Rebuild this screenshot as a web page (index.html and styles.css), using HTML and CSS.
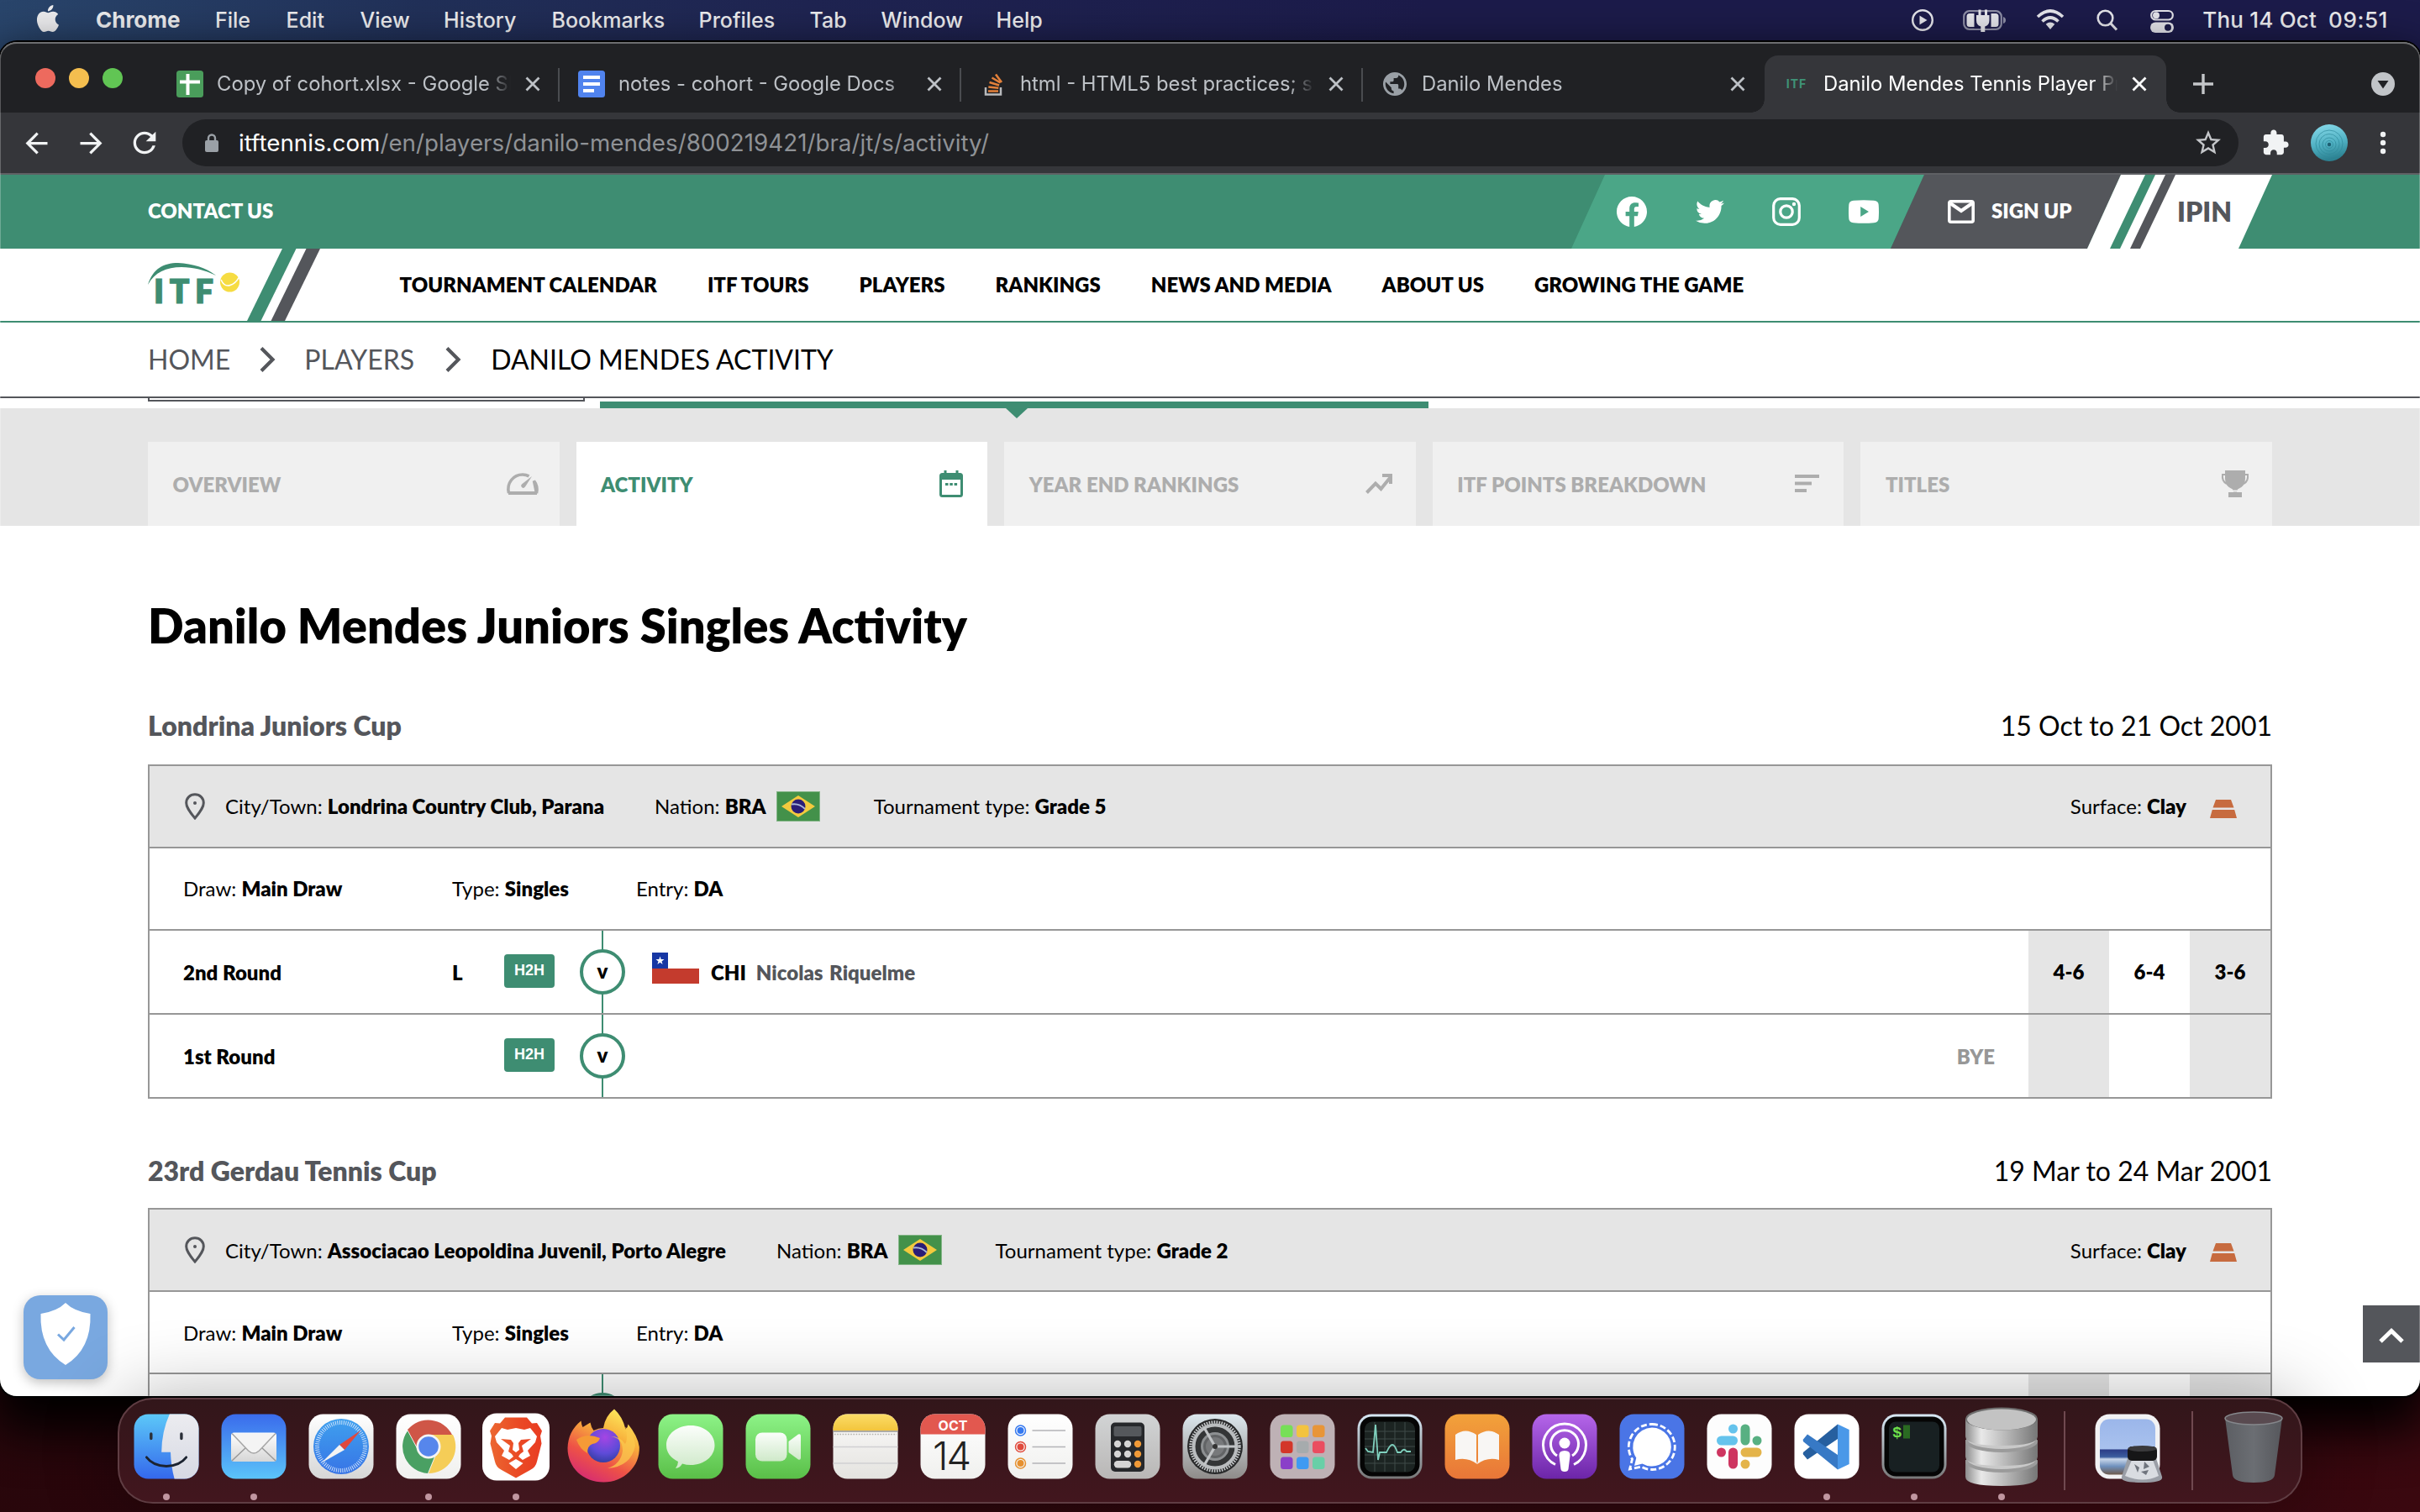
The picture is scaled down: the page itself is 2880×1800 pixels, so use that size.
FILE: index.html
```html
<!DOCTYPE html>
<html lang="en">
<head>
<meta charset="utf-8">
<title>Danilo Mendes Tennis Player Profile</title>
<link rel="stylesheet" href="styles.css">
</head>
<body>
<svg class="defs" width="0" height="0" aria-hidden="true">
  <defs>
    <linearGradient id="g-finder" x1="0" y1="0" x2="0" y2="1"><stop offset="0" stop-color="#5cc8f8"/><stop offset="1" stop-color="#3468ec"/></linearGradient>
    <linearGradient id="g-face" x1="0" y1="0" x2="0" y2="1"><stop offset="0" stop-color="#ececf0"/><stop offset="1" stop-color="#d6d9e3"/></linearGradient>
    <linearGradient id="g-mail" x1="0" y1="0" x2="0" y2="1"><stop offset="0" stop-color="#3a6bec"/><stop offset="1" stop-color="#5bc4f9"/></linearGradient>
    <linearGradient id="g-white" x1="0" y1="0" x2="0" y2="1"><stop offset="0" stop-color="#fff"/><stop offset="1" stop-color="#d6d6d6"/></linearGradient>
    <linearGradient id="g-paper" x1="0" y1="0" x2="0" y2="1"><stop offset="0" stop-color="#fff"/><stop offset="1" stop-color="#f0f0ee"/></linearGradient>
    <linearGradient id="g-compass" x1="0" y1="0" x2="0" y2="1"><stop offset="0" stop-color="#3fa0ee"/><stop offset="1" stop-color="#3774e6"/></linearGradient>
    <linearGradient id="g-green" x1="0" y1="0" x2="0" y2="1"><stop offset="0" stop-color="#8df387"/><stop offset="1" stop-color="#5abf48"/></linearGradient>
    <linearGradient id="g-bubble" x1="0" y1="0" x2="0" y2="1"><stop offset="0" stop-color="#fbfefb"/><stop offset="1" stop-color="#cfe9c9"/></linearGradient>
    <linearGradient id="g-note" x1="0" y1="0" x2="0" y2="1"><stop offset="0" stop-color="#fbdc68"/><stop offset="1" stop-color="#f3c53c"/></linearGradient>
    <linearGradient id="g-pad" x1="0" y1="0" x2="0" y2="1"><stop offset="0" stop-color="#fbfafa"/><stop offset="1" stop-color="#e4e3df"/></linearGradient>
    <linearGradient id="g-brave" x1="0" y1="0" x2="1" y2="0"><stop offset="0" stop-color="#ec6731"/><stop offset=".55" stop-color="#ea4a25"/><stop offset="1" stop-color="#e93c22"/></linearGradient>
    <linearGradient id="g-fox" x1=".8" y1="0" x2=".3" y2="1"><stop offset="0" stop-color="#fdf060"/><stop offset=".35" stop-color="#f8b13c"/><stop offset=".7" stop-color="#ee5246"/><stop offset="1" stop-color="#d62c72"/></linearGradient>
    <radialGradient id="g-foxball" cx=".55" cy=".25" r=".8"><stop offset="0" stop-color="#a545e4"/><stop offset=".6" stop-color="#5e4bd8"/><stop offset="1" stop-color="#2f3c9c"/></radialGradient>
    <linearGradient id="g-calc" x1="0" y1="0" x2="0" y2="1"><stop offset="0" stop-color="#d2d4d5"/><stop offset="1" stop-color="#b9b7b6"/></linearGradient>
    <linearGradient id="g-gear" x1="0" y1="0" x2="0" y2="1"><stop offset="0" stop-color="#dde8ee"/><stop offset="1" stop-color="#8e8b89"/></linearGradient>
    <linearGradient id="g-books" x1="0" y1="0" x2="0" y2="1"><stop offset="0" stop-color="#f2a23a"/><stop offset="1" stop-color="#e97638"/></linearGradient>
    <linearGradient id="g-pod" x1="0" y1="0" x2="0" y2="1"><stop offset="0" stop-color="#b566ea"/><stop offset="1" stop-color="#6c25a8"/></linearGradient>
    <linearGradient id="g-rim" x1="0" y1="0" x2="0" y2="1"><stop offset="0" stop-color="#d8e9f6"/><stop offset="1" stop-color="#777"/></linearGradient>
    <linearGradient id="g-metal" x1="0" y1="0" x2="1" y2="0"><stop offset="0" stop-color="#8d8d8d"/><stop offset=".22" stop-color="#e9e9e9"/><stop offset=".6" stop-color="#b2b2b2"/><stop offset="1" stop-color="#767676"/></linearGradient>
    <linearGradient id="g-sea" x1="0" y1="0" x2="0" y2="1"><stop offset="0" stop-color="#9bb6ea"/><stop offset=".54" stop-color="#a9c2ee"/><stop offset=".55" stop-color="#2b3c86"/><stop offset=".68" stop-color="#3c5d9e"/><stop offset=".72" stop-color="#c9d7ea"/><stop offset=".85" stop-color="#6f90bd"/><stop offset="1" stop-color="#6e5a4c"/></linearGradient>
    <linearGradient id="g-bin" x1="0" y1="0" x2="1" y2="0"><stop offset="0" stop-color="#5c5e63"/><stop offset=".5" stop-color="#6b6e73"/><stop offset="1" stop-color="#56575c"/></linearGradient>
    <linearGradient id="g-ring" x1="0" y1="0" x2=".2" y2="1"><stop offset="0" stop-color="#8adcec"/><stop offset=".6" stop-color="#4fb0c2"/><stop offset="1" stop-color="#2d8292"/></linearGradient>
    <symbol id="x" viewBox="0 0 18 18"><path d="M1.500 1.500l15 15M16.500 1.500l-15 15" fill="none" stroke="currentColor" stroke-width="2.800"/></symbol>
    <symbol id="brazil" viewBox="0 0 52 36"><rect width="52" height="36" fill="#43914a"/><rect x=".5" y=".5" width="51" height="35" fill="none" stroke="#84b587"/><path d="M26 5L46 18 26 31 6 18z" fill="#f3ca3e"/><circle cx="26" cy="18" r="8.500" fill="#2a1d77"/><path d="M18 15.500q9-1.500 16 5.500" fill="none" stroke="#a9b6d8" stroke-width="1.800"/></symbol>
    <symbol id="pin" viewBox="0 0 24 32"><path d="M12 1.700C6.200 1.700 1.700 6 1.700 11.800 1.700 18.500 12 30 12 30s10.300-11.500 10.300-18.200C22.300 6 17.800 1.700 12 1.700z" fill="none" stroke="#54565b" stroke-width="3"/><circle cx="12" cy="12" r="2" fill="#54565b"/></symbol>
    <symbol id="clay" viewBox="0 0 32 22"><path d="M7 0h18l3.500 9.500h-25zM2.800 12h26.400L32 22H0z" fill="#c76b3f"/></symbol>
  </defs>
</svg>

<header class="menubar">
  <svg class="apple" viewBox="0 0 24 24"><path fill="#ececee" d="M12.152 6.896c-.948 0-2.415-1.078-3.960-1.040-2.040.027-3.910 1.183-4.961 3.014-2.117 3.675-.546 9.103 1.519 12.090 1.013 1.454 2.208 3.090 3.792 3.039 1.520-.065 2.090-.987 3.935-.987 1.831 0 2.350.987 3.960.948 1.637-.026 2.676-1.480 3.676-2.948 1.156-1.688 1.636-3.325 1.662-3.415-.039-.013-3.182-1.221-3.220-4.857-.026-3.040 2.480-4.494 2.597-4.559-1.429-2.090-3.623-2.324-4.390-2.376-2-.156-3.675 1.090-4.610 1.090zM15.530 3.830c.843-1.012 1.400-2.427 1.245-3.830-1.207.052-2.662.805-3.532 1.818-.780.896-1.454 2.338-1.273 3.714 1.338.104 2.715-.688 3.559-1.701"/></svg>
  <nav class="menus"><b>Chrome</b><span>File</span><span>Edit</span><span>View</span><span>History</span><span>Bookmarks</span><span>Profiles</span><span>Tab</span><span>Window</span><span>Help</span></nav>
  <div class="status">
    <svg class="st-play" viewBox="0 0 28 28"><circle cx="14" cy="14" r="11.800" fill="none" stroke="#e4e4ea" stroke-width="2.400"/><path d="M10.500 8.500v11l9-5.500z" fill="#e4e4ea"/></svg>
    <svg class="st-batt" viewBox="0 0 52 28"><rect x="1.200" y="3.200" width="44.600" height="21.600" rx="6.500" fill="none" stroke="#8e8ea6" stroke-width="2.200"/><path d="M48 10q3 1 3 4t-3 4z" fill="#8e8ea6"/><path d="M8 6h6v16H8q-3.500 0-3.500-3.500v-9Q4.500 6 8 6zM33 6h6q3.500 0 3.500 3.500v9q0 3.500-3.500 3.500h-6z" fill="#e4e4ea"/><path d="M13.500 5h20v19h-20z" fill="#1c1b4a"/><path d="M20 1.500v7M27.500 1.500v7" stroke="#e4e4ea" stroke-width="3"/><path d="M16 8h15.500v6q0 6-5.200 7.500V28h-5v-6.500Q16 20 16 14z" fill="#e4e4ea"/></svg>
    <svg class="st-wifi" viewBox="0 0 34 24"><path d="M2 9q15-14 30 0M7.500 14.500q9.500-9 19 0" fill="none" stroke="#e4e4ea" stroke-width="3.600"/><path d="M17 24l-5.300-6.200q5.300-4.400 10.600 0z" fill="#e4e4ea"/></svg>
    <svg class="st-find" viewBox="0 0 26 26"><circle cx="10.500" cy="10.500" r="8.800" fill="none" stroke="#e4e4ea" stroke-width="2.600"/><path d="M17 17l7 7.500" stroke="#e4e4ea" stroke-width="3"/></svg>
    <svg class="st-ctl" viewBox="0 0 30 28"><rect x="2.200" y="2" width="25.600" height="10.500" rx="5.200" fill="none" stroke="#e4e4ea" stroke-width="2.200"/><circle cx="8" cy="7.200" r="4" fill="#e4e4ea"/><rect x="1" y="15.500" width="28" height="12.500" rx="6.200" fill="#e4e4ea"/><circle cx="22" cy="21.700" r="4" fill="#1e1d4b"/></svg>
    <span class="day">Thu 14 Oct</span><span class="time">09:51</span>
  </div>
</header>

<main class="window">
  <div class="tabstrip">
    <div class="lights"><i class="red"></i><i class="amber"></i><i class="green"></i></div>
    <div class="tab">
      <svg class="fav" viewBox="0 0 32 32"><rect width="32" height="32" rx="3.500" fill="#4a9d5b"/><path d="M13.500 4v25M4 13.500h24" stroke="#fff" stroke-width="4"/></svg>
      <span class="tab-title">Copy of cohort.xlsx - Google Sheets</span><svg class="close"><use href="#x"/></svg>
    </div>
    <div class="tab">
      <svg class="fav" viewBox="0 0 32 32"><rect width="32" height="32" rx="3.500" fill="#5083ee"/><path d="M6 8h20M6 16h20M6 24h13" stroke="#fff" stroke-width="3.800"/></svg>
      <span class="tab-title">notes - cohort - Google Docs</span><svg class="close"><use href="#x"/></svg>
    </div>
    <div class="tab">
      <svg class="fav" viewBox="-1 0 32 32"><path d="M6 20v8.500h18V20" fill="none" stroke="#b9bbbd" stroke-width="2.500"/><path d="M9 24.500h12M9.300 19.500l12 1.300M10.500 14l11.600 3.500M13.500 8.500l10 6M18 4.500l7 9.500" stroke="#e2803a" stroke-width="2.600"/></svg>
      <span class="tab-title">html - HTML5 best practices; section</span><svg class="close"><use href="#x"/></svg>
    </div>
    <div class="tab plain">
      <svg class="fav" viewBox="0.600 0.600 22.800 22.800"><path fill="#9aa0a6" d="M12 2C6.480 2 2 6.480 2 12s4.480 10 10 10 10-4.480 10-10S17.520 2 12 2zm-1 17.930c-3.950-.490-7-3.850-7-7.930 0-.620.080-1.210.210-1.790L9 15v1c0 1.100.900 2 2 2v1.930zm6.900-2.540c-.260-.810-1-1.390-1.900-1.390h-1v-3c0-.550-.450-1-1-1H8v-2h2c.550 0 1-.450 1-1V7h2c1.100 0 2-.900 2-2v-.410c2.930 1.190 5 4.060 5 7.410 0 2.080-.800 3.970-2.100 5.390z"/></svg>
      <span class="tab-title">Danilo Mendes</span><svg class="close"><use href="#x"/></svg>
    </div>
    <div class="tab active">
      <span class="fav itf-fav">ITF</span>
      <span class="tab-title">Danilo Mendes Tennis Player Profile</span><svg class="close"><use href="#x"/></svg>
    </div>
    <svg class="plus" viewBox="0 0 24 24"><path d="M12 0v24M0 12h24" stroke="#c4c6c9" stroke-width="3.400"/></svg>
    <svg class="more-tabs" viewBox="0 0 28 28"><circle cx="14" cy="14" r="14" fill="#c1c4c8"/><path d="M7.500 10h13L14 19.500z" fill="#202124"/></svg>
  </div>

  <div class="toolbar">
    <svg class="tb back" viewBox="0 0 24 24"><path d="M20 11H7.830l5.590-5.590L12 4l-8 8 8 8 1.410-1.410L7.830 13H20v-2z"/></svg>
    <svg class="tb fwd" viewBox="0 0 24 24"><path d="M4 11h12.170l-5.590-5.590L12 4l8 8-8 8-1.410-1.410L16.170 13H4z"/></svg>
    <svg class="tb reload" viewBox="0 0 24 24"><path d="M17.650 6.350A7.958 7.958 0 0012 4c-4.420 0-7.990 3.580-7.990 8s3.570 8 7.990 8c3.730 0 6.840-2.550 7.730-6h-2.080A5.990 5.990 0 0112 18c-3.310 0-6-2.690-6-6s2.690-6 6-6c1.660 0 3.140.690 4.220 1.780L13 11h7V4l-2.350 2.350z"/></svg>
    <div class="omnibox">
      <svg class="lock" viewBox="0 0 16 22"><rect y="8" width="16" height="14" rx="2" fill="#9aa0a6"/><path d="M4 9V5.500a4 4 0 018 0V9" fill="none" stroke="#9aa0a6" stroke-width="2.400"/></svg>
      <span class="url"><em>itftennis.com</em>/en/players/danilo-mendes/800219421/bra/jt/s/activity/</span>
      <svg class="star" viewBox="0 0 24 24"><path fill="#c4c6c9" d="M22 9.240l-7.190-.620L12 2 9.190 8.630 2 9.240l5.460 4.730L5.820 21 12 17.270 18.180 21l-1.630-7.030L22 9.240zM12 15.400l-3.760 2.270 1-4.280-3.320-2.880 4.380-.380L12 6.100l1.710 4.040 4.380.380-3.320 2.880 1 4.280L12 15.400z"/></svg>
    </div>
    <svg class="puzzle" viewBox="0 0 24 24"><path fill="#f1f3f4" d="M20.500 11H19V7c0-1.100-.900-2-2-2h-4V3.500C13 2.120 11.880 1 10.500 1S8 2.120 8 3.500V5H4c-1.100 0-1.990.900-1.990 2v3.800H3.500c1.490 0 2.700 1.210 2.700 2.700s-1.210 2.700-2.700 2.700H2V20c0 1.100.900 2 2 2h3.800v-1.500c0-1.490 1.210-2.700 2.700-2.700 1.490 0 2.700 1.210 2.700 2.700V22H17c1.100 0 2-.900 2-2v-4h1.500c1.380 0 2.500-1.120 2.500-2.500S21.880 11 20.500 11z"/></svg>
    <svg class="avatar" viewBox="0 0 44 44"><circle cx="22" cy="22" r="22" fill="url(#g-ring)"/><g fill="none" stroke="#2f8b9c" stroke-width="1" opacity=".7"><circle cx="22" cy="24" r="4.500"/><circle cx="22" cy="24" r="8"/><circle cx="22" cy="23.500" r="12"/><circle cx="22" cy="23" r="16"/></g><circle cx="22" cy="24" r="2.200" fill="#1d5f72"/></svg>
    <svg class="dots" viewBox="0 0 8 28"><circle cx="4" cy="4" r="3.200"/><circle cx="4" cy="14" r="3.200"/><circle cx="4" cy="24" r="3.200"/></svg>
  </div>

  <div class="topbar">
    <a class="contact">CONTACT US</a>
    <div class="social">
      <svg class="fb" viewBox="0 0 24 24"><path d="M24 12.073c0-6.627-5.373-12-12-12s-12 5.373-12 12c0 5.990 4.388 10.954 10.125 11.854v-8.385H7.078v-3.470h3.047V9.430c0-3.007 1.792-4.669 4.533-4.669 1.312 0 2.686.235 2.686.235v2.953H15.830c-1.491 0-1.956.925-1.956 1.874v2.250h3.328l-.532 3.470h-2.796v8.385C19.612 23.027 24 18.062 24 12.073z"/></svg>
      <svg class="tw" viewBox="0 0 24 24"><path d="M23.953 4.570a10 10 0 01-2.825.775 4.958 4.958 0 002.163-2.723c-.951.555-2.005.959-3.127 1.184a4.920 4.920 0 00-8.384 4.482C7.690 8.095 4.067 6.130 1.640 3.162a4.822 4.822 0 00-.666 2.475c0 1.710.870 3.213 2.188 4.096a4.904 4.904 0 01-2.228-.616v.060a4.923 4.923 0 003.946 4.827 4.996 4.996 0 01-2.212.085 4.936 4.936 0 004.604 3.417 9.867 9.867 0 01-6.102 2.105c-.390 0-.779-.023-1.170-.067a13.995 13.995 0 007.557 2.209c9.053 0 13.998-7.496 13.998-13.985 0-.210 0-.420-.015-.630A9.935 9.935 0 0024 4.590z"/></svg>
      <svg class="ig" viewBox="0 0 34 34"><rect x="1.700" y="1.700" width="30.600" height="30.600" rx="8" fill="none" stroke="#fff" stroke-width="3.200"/><circle cx="17" cy="17" r="7.200" fill="none" stroke="#fff" stroke-width="3.200"/><circle cx="26" cy="8" r="2.200"/></svg>
      <svg class="yt" viewBox="0 0 36 28"><path fill-rule="evenodd" d="M6 .700Q18-.300 30 .700q5.500.500 5.700 5 .6 8.300 0 16.600-.2 4.500-5.700 5-12 1-24 0-5.500-.500-5.700-5-.6-8.300 0-16.600Q.500 1.200 6 .700zM14.200 8v12L24 14z"/></svg>
    </div>
    <div class="signup"><svg class="mail" viewBox="0 0 32 28"><rect x="1.800" y="1.800" width="28.400" height="24.400" rx="2" fill="none" stroke="#fff" stroke-width="3.600"/><path d="M3 4l13 9L29 4" fill="none" stroke="#fff" stroke-width="4"/></svg><span>SIGN UP</span></div>
    <div class="ipin"><svg class="stripes" viewBox="0 0 80 88"><path d="M42 0h12L12 88H0z" fill="#3e8d72"/><path d="M66 0h12L36 88H24z" fill="#54565b"/></svg><span>IPIN</span></div>
  </div>

  <div class="navbar">
    <div class="logo">
      <svg viewBox="0 0 206 86"><path d="M0 43C6 24 18 17 36 17c18 1 34 6 45 15C69 26 54 22 40 22 22 22 8 28 0 43z" fill="#3e8d72"/><circle cx="97.500" cy="40" r="11.500" fill="#f6dc42"/><path d="M87 37q4 9 11 6.500t10-9" fill="none" stroke="#fff" stroke-width="1.600"/><path d="M160 0h16.500L134.500 86H118z" fill="#3e8d72"/><path d="M188.500 0H205L163 86h-16.500z" fill="#54565b"/><text x="7" y="65" class="logo-text" textLength="71">ITF</text></svg>
    </div>
    <nav class="links"><a>TOURNAMENT CALENDAR</a><a>ITF TOURS</a><a>PLAYERS</a><a>RANKINGS</a><a>NEWS AND MEDIA</a><a>ABOUT US</a><a>GROWING THE GAME</a></nav>
  </div>

  <div class="crumbs"><a>HOME</a><svg viewBox="0 0 18 30"><path d="M2 1.500L15.500 15 2 28.500" fill="none" stroke="#54565b" stroke-width="4.200"/></svg><a>PLAYERS</a><svg class="second" viewBox="0 0 18 30"><path d="M2 1.500L15.500 15 2 28.500" fill="none" stroke="#54565b" stroke-width="4.200"/></svg><b>DANILO MENDES ACTIVITY</b></div>

  <div class="peek"><div class="peek-box"></div><div class="peek-bar"></div></div>

  <div class="subtabs">
    <a class="subtab">OVERVIEW<svg class="i-gauge" viewBox="0 0 38 26"><path d="M2.500 24C-.5 12 8 2 19 2q4 0 7.500 1.800M32.500 9.500Q37.500 16 35.500 24z" fill="none" stroke="#adadad" stroke-width="3.600"/><path d="M2 24h34" stroke="#adadad" stroke-width="4"/><path d="M30 4L22 16.500q-2 2.500-4 .5t.500-4z" fill="#adadad"/></svg></a>
    <a class="subtab on">ACTIVITY<svg class="i-cal" viewBox="0 0 28 32"><path d="M7 0v6M21 0v6" stroke="#3e8d72" stroke-width="3"/><rect x="1.500" y="4.500" width="25" height="26" rx="2" fill="none" stroke="#3e8d72" stroke-width="3"/><path d="M1 4h26v7H1z" fill="#3e8d72"/><path d="M7 16.500h3.500M12.300 16.500h3.500M17.600 16.500h3.500" stroke="#3e8d72" stroke-width="3"/></svg></a>
    <a class="subtab">YEAR END RANKINGS<svg class="i-trend" viewBox="0 0 32 24"><path d="M1.500 22.500L12 11.500l6.500 6.500L29 5M20 2h10v10" fill="none" stroke="#adadad" stroke-width="4"/></svg></a>
    <a class="subtab">ITF POINTS BREAKDOWN<svg class="i-bars" viewBox="0 0 30 22"><path d="M0 2h29M0 10.500h20M0 19h14" stroke="#adadad" stroke-width="3.800"/></svg></a>
    <a class="subtab">TITLES<svg class="i-cup" viewBox="0 0 34 32"><path d="M5 0h24v10q0 9-9 12.500l-1 3.500h6v6H9v-6h6l-1-3.500Q5 19 5 10z" fill="#adadad"/><path d="M5 5H2q-1 8 5 11M29 5h3q1 8-5 11" fill="none" stroke="#adadad" stroke-width="2"/><path d="M13 24.500h8" stroke="#f0f0f0" stroke-width="2"/></svg></a>
  </div>

  <section class="content">
    <h1>Danilo Mendes Juniors Singles Activity</h1>
    <div class="event-head first"><h2>Londrina Juniors Cup</h2><span>15 Oct to 21 Oct 2001</span></div>
    <div class="event raised">
      <div class="venue"><svg class="pin"><use href="#pin"/></svg><span class="city">City/Town: <b>Londrina Country Club, Parana</b></span><span>Nation: <b>BRA</b></span><svg class="flag"><use href="#brazil"/></svg><span>Tournament type: <b>Grade 5</b></span><span class="surface">Surface: <b>Clay</b></span><svg class="clay"><use href="#clay"/></svg></div>
      <div class="draw"><span>Draw: <b>Main Draw</b></span><span>Type: <b>Singles</b></span><span>Entry: <b>DA</b></span></div>
      <div class="match">
        <b>2nd Round</b><b>L</b><span class="h2h">H2H</span><div class="vs"><b>v</b></div>
        <div class="opp"><svg class="chile" viewBox="0 0 56 37"><path d="M0 0h19v19H0z" fill="#1737a4"/><path d="M19 0h37v19H19z" fill="#fff"/><path d="M0 19h56v18H0z" fill="#c43b2d"/><path d="M9.500 4.500l1.200 3.600h3.800l-3 2.300 1.100 3.600-3.100-2.200L6.400 14l1.100-3.600-3-2.300h3.800z" fill="#fff"/></svg><b>CHI</b><span class="name">Nicolas Riquelme</span></div>
        <b class="set">4-6</b><b class="set mid">6-4</b><b class="set">3-6</b>
      </div>
      <div class="match">
        <b>1st Round</b><b></b><span class="h2h">H2H</span><div class="vs"><b>v</b></div>
        <div class="opp"><span class="bye">BYE</span></div>
        <b class="set"></b><b class="set mid"></b><b class="set"></b>
      </div>
    </div>
    <div class="event-head"><h2>23rd Gerdau Tennis Cup</h2><span>19 Mar to 24 Mar 2001</span></div>
    <div class="event">
      <div class="venue"><svg class="pin"><use href="#pin"/></svg><span class="city">City/Town: <b>Associacao Leopoldina Juvenil, Porto Alegre</b></span><span>Nation: <b>BRA</b></span><svg class="flag"><use href="#brazil"/></svg><span>Tournament type: <b>Grade 2</b></span><span class="surface">Surface: <b>Clay</b></span><svg class="clay"><use href="#clay"/></svg></div>
      <div class="draw"><span>Draw: <b>Main Draw</b></span><span>Type: <b>Singles</b></span><span>Entry: <b>DA</b></span></div>
      <div class="match">
        <b></b><b></b><span></span><div class="vs"><b></b></div><div class="opp"></div>
        <b class="set"></b><b class="set mid"></b><b class="set"></b>
      </div>
    </div>
  </section>
  <div class="shield"><svg viewBox="0 0 60 74"><path d="M30 0Q40 10 59.500 13 61 55 30 74-1 55 .500 13 20 10 30 0z" fill="#fff"/><path d="M21 37.500l7 6.500 12.500-15" fill="none" stroke="#79a8e0" stroke-width="3"/></svg></div>
  <div class="to-top"><svg viewBox="0 0 30 18"><path d="M2 16L15 3.500 28 16" fill="none" stroke="#fff" stroke-width="5"/></svg></div>
</main>

<footer class="dock">
  <div class="app run"><svg viewBox="0 0 104 104"><rect x="13.500" y="13.500" width="77" height="77" rx="17" fill="url(#g-finder)"/><path d="M55.800 13.500H73.500a17 17 0 0117 17v43a17 17 0 01-17 17H61.600Q57.500 76 57 58.800H46.200Q46.500 34 55.800 13.500z" fill="url(#g-face)"/><path d="M33.800 37v5.500M69.900 37v5.500" stroke="#2b3038" stroke-width="3.400" stroke-linecap="round"/><path d="M28.400 64.800Q36 75 52 75.500q16-.5 23.700-10.700" fill="none" stroke="#1b2330" stroke-width="2.800" stroke-linecap="round"/></svg></div>
  <div class="app run"><svg viewBox="0 0 104 104"><rect x="13.500" y="13.500" width="77" height="77" rx="17" fill="url(#g-mail)"/><rect x="25" y="35.500" width="54" height="34.500" rx="3.500" fill="url(#g-white)"/><path d="M26 69l17-16M78 69L61 53" stroke="#9a9a9a" stroke-width="1.500"/><path d="M26 36.500l19.500 20.500q6.500 6 13 0L78 36.500" fill="#f4f4f4" stroke="#a5a5a5" stroke-width="1.500"/></svg></div>
  <div class="app"><svg viewBox="0 0 104 104"><rect x="13.500" y="13.500" width="77" height="77" rx="17" fill="url(#g-white)"/><circle cx="52" cy="52" r="33" fill="url(#g-compass)"/><circle cx="52" cy="52" r="28.500" fill="none" stroke="#d8e8fb" stroke-width="5" stroke-dasharray=".9 1.590"/><path d="M75.400 32.800L56 56l-6-6z" fill="#e0483d"/><path d="M28.500 71.500L56 56l-6-6z" fill="#f3f3f3"/></svg></div>
  <div class="app run"><svg viewBox="0 0 104 104"><rect x="13.500" y="13.500" width="77" height="77" rx="17" fill="url(#g-paper)"/><path d="M52 38h29a32 32 0 01-29 46l13-32z" fill="#f5cd57"/><path d="M27 33.500L40 58l20 4-9 22A32 32 0 0127 33.500z" fill="#4aa063"/><path d="M27 32l13 24 10-18h30A32 32 0 0027 32z" fill="#cf5647"/><circle cx="52" cy="52" r="14.500" fill="#f4f4f4"/><circle cx="52" cy="52" r="11.800" fill="#5686ec"/></svg></div>
  <div class="app run"><svg viewBox="0 0 104 104"><rect x="12" y="12.500" width="80" height="80" rx="17" fill="#fff"/><path d="M39 17.500h26l6 7 6-.5 6 9.500-2 6 1.500 9L77 70q-1.500 7-8 10L52 89.500 35 80q-6.500-3-8-10l-5.500-21.500 1.500-9-2-6L27 24l6 .5z" fill="url(#g-brave)"/><path d="M35 30l7 2 10-2 10 2 7-2 8 10-2 7-9 10 3 6-9 5-5-4 2-3 4-3-2-7 11-8-12 1-3 4 1 8-4 3-4-3 1-8-3-4-12-1 11 8-2 7 4 3 2 3-5 4-9-5 3-6-9-10-2-7z" fill="#fff"/><path d="M52 67l8.500 5L52 79l-8.500-7z" fill="#fff"/></svg></div>
  <div class="app"><svg viewBox="0 0 104 104"><path d="M65 7.500q10 9 13.500 24 3-3 3-6 11.500 14 13.300 27C96 76 76 94.500 52.500 94.500 28 94.500 9.500 77 9.500 54q.5-20 16-32.500.5 5 2 7.500l9-5.500q1 6 4 9.500 6-3 11.500-3Q54 16 65 7.500z" fill="url(#g-fox)"/><circle cx="52" cy="51" r="20" fill="url(#g-foxball)"/><path d="M20 44q12-9 28-2-2 6-9 7-6 2-6 11-9-5-13-16z" fill="#f59a36"/><path d="M61 40q14 2 14 17-2 16-18 21 28-2 33-27-2-18-12-22 4 14 0 20-6-9-17-9z" fill="#fbc94e" opacity=".75"/></svg></div>
  <div class="app"><svg viewBox="0 0 104 104"><rect x="13.500" y="13.500" width="77" height="77" rx="17" fill="url(#g-green)"/><path d="M52 27c16 0 28.500 10 28.500 23.500S68 74 52 74q-5 0-10-1.500-3 5-8 5.500 3-4 3-8-14-7-14-19.500C23 37 36 27 52 27z" fill="url(#g-bubble)"/></svg></div>
  <div class="app"><svg viewBox="0 0 104 104"><rect x="13.500" y="13.500" width="77" height="77" rx="17" fill="url(#g-green)"/><rect x="25" y="35.500" width="37.500" height="34" rx="8" fill="url(#g-bubble)"/><path d="M64.500 46L76 37.500q3-1 3 2v26q0 3-3 2L64.500 59z" fill="url(#g-bubble)"/></svg></div>
  <div class="app"><svg viewBox="0 0 104 104"><rect x="13.500" y="13.500" width="77" height="77" rx="17" fill="url(#g-pad)"/><path d="M13.500 33V30.500a17 17 0 0117-17h43a17 17 0 0117 17V33z" fill="url(#g-note)"/><path d="M13.500 34h77" stroke="#96938a" stroke-width="1.500"/><path d="M15 37.500h74" stroke="#b5b3ad" stroke-width="1.600" stroke-dasharray="1.600 1.600"/><path d="M13.500 52.500h77M13.500 72h77" stroke="#d0cfd2" stroke-width="1.600"/></svg></div>
  <div class="app"><svg viewBox="0 0 104 104"><rect x="13.500" y="13.500" width="77" height="77" rx="17" fill="url(#g-paper)"/><path d="M13.500 37.500v-7a17 17 0 0117-17h43a17 17 0 0117 17v7z" fill="#e2584f"/><text x="52" y="32.800" class="cal-month">OCT</text><text x="50" y="79.500" class="cal-day">14</text></svg></div>
  <div class="app"><svg viewBox="0 0 104 104"><rect x="13.500" y="13.500" width="77" height="77" rx="17" fill="url(#g-paper)"/><g fill="none" stroke-width="1.500"><circle cx="28.500" cy="33" r="6" stroke="#3478f0"/><circle cx="28.500" cy="52.500" r="6" stroke="#e04a3c"/><circle cx="28.500" cy="72" r="6" stroke="#e6902f"/></g><circle cx="28.500" cy="33" r="4" fill="#3478f0"/><circle cx="28.500" cy="52.500" r="4" fill="#e04a3c"/><circle cx="28.500" cy="72" r="4" fill="#e6902f"/><path d="M42.500 33h39.500M42.500 52.500h39.500M42.500 72h39.500" stroke="#b4b4b8" stroke-width="1.600"/></svg></div>
  <div class="app"><svg viewBox="0 0 104 104"><rect x="13.500" y="13.500" width="77" height="77" rx="17" fill="url(#g-calc)"/><rect x="32" y="23.500" width="40" height="58.500" rx="5" fill="#26282b"/><rect x="35.500" y="28" width="33" height="12" rx="2" fill="#55585c"/><g fill="#d5d5d5"><circle cx="40" cy="49" r="4.200"/><circle cx="52" cy="49" r="4.200"/><circle cx="40" cy="61" r="4.200"/><circle cx="52" cy="61" r="4.200"/><rect x="35.800" y="69" width="20.400" height="8.400" rx="4.200"/></g><g fill="#f09a37"><circle cx="64" cy="49" r="4.200"/><circle cx="64" cy="61" r="4.200"/><circle cx="64" cy="73" r="4.200"/></g></svg></div>
  <div class="app"><svg viewBox="0 0 104 104"><rect x="13.500" y="13.500" width="77" height="77" rx="17" fill="url(#g-gear)"/><circle cx="52" cy="52" r="33" fill="#28292a"/><circle cx="52" cy="52" r="29" fill="none" stroke="#c5c8ca" stroke-width="3.500" stroke-dasharray="1.600 1.400"/><circle cx="52" cy="52" r="25.500" fill="#333536" stroke="#b9bcbe" stroke-width="4"/><circle cx="52" cy="52" r="15.500" fill="#626466" stroke="#8d9092" stroke-width="3"/><circle cx="52" cy="52" r="11" fill="#77797b"/><path d="M52 52h26M52 52L39 29.500M52 52L39 74.500" stroke="#c0c3c5" stroke-width="3.200"/><circle cx="52" cy="52" r="3" fill="#333"/></svg></div>
  <div class="app"><svg viewBox="0 0 104 104"><rect x="13.500" y="13.500" width="77" height="77" rx="17" fill="#beb1b5"/><rect x="26" y="26.500" width="14.500" height="14.500" rx="3.500" fill="#77df57"/><rect x="45" y="26.500" width="14.500" height="14.500" rx="3.500" fill="#f3c33f"/><rect x="64" y="26.500" width="14.500" height="14.500" rx="3.500" fill="#e89538"/><rect x="26" y="45.500" width="14.500" height="14.500" rx="3.500" fill="#d3362a"/><rect x="45" y="45.500" width="14.500" height="14.500" rx="3.500" fill="#a6abad"/><rect x="64" y="45.500" width="14.500" height="14.500" rx="3.500" fill="#ea4d60"/><rect x="26" y="64.500" width="14.500" height="14.500" rx="3.500" fill="#8a3fc9"/><rect x="45" y="64.500" width="14.500" height="14.500" rx="3.500" fill="#3f9af2"/><rect x="64" y="64.500" width="14.500" height="14.500" rx="3.500" fill="#68cfa7"/></svg></div>
  <div class="app"><svg viewBox="0 0 104 104"><rect x="13.500" y="13.500" width="77" height="77" rx="17" fill="url(#g-rim)"/><rect x="16.500" y="16.500" width="71" height="71" rx="14" fill="#050505"/><rect x="22" y="22.500" width="60" height="60" rx="9" fill="#1c2422"/><path d="M34 23v59M46 23v59M58 23v59M70 23v59M22 34h60M22 43h60M22 52h60M22 62h60M22 72h60" stroke="#3f4b48" stroke-width="1"/><path d="M23 54l3 4 6 1 3-33 3 42 2-9h8q4-9 7-9t6 9h4q4-6 7-1h5" fill="none" stroke="#7fd0bd" stroke-width="1.800"/></svg></div>
  <div class="app"><svg viewBox="0 0 104 104"><rect x="13.500" y="13.500" width="77" height="77" rx="17" fill="url(#g-books)"/><path d="M26 38q12-9 25 0v31l1 4q-12-9-26-5zM78 38q-12-9-25 0v31l-1 4q12-9 26-5z" fill="#f8f6f4"/></svg></div>
  <div class="app"><svg viewBox="0 0 104 104"><rect x="13.500" y="13.500" width="77" height="77" rx="17" fill="url(#g-pod)"/><g fill="none" stroke="#fff" stroke-width="3"><path d="M41 73.500A25.500 25.500 0 1163 73.500"/><path d="M43 63A16.500 16.500 0 1161 63"/></g><circle cx="52" cy="48" r="6.500" fill="#fff"/><path d="M52 57q7 0 6.500 6l-2 16q-.5 3-4.500 3t-4.500-3l-2-16q-.5-6 6.500-6z" fill="#fff"/></svg></div>
  <div class="app"><svg viewBox="0 0 104 104"><rect x="13.500" y="13.500" width="77" height="77" rx="17" fill="#4a75e6"/><path d="M52 29.500a23 23 0 11-11.500 43L31 75l2.300-9.500A23 23 0 0152 29.500z" fill="#fff"/><path d="M52 25.500a27 27 0 11-13 50.500L25.500 79l3-12A27 27 0 0152 25.500z" fill="none" stroke="#fff" stroke-width="2.800" stroke-dasharray="7 3"/></svg></div>
  <div class="app"><svg viewBox="0 0 104 104"><rect x="13.500" y="13.500" width="77" height="77" rx="17" fill="#fdfdfd"/><g stroke-width="11" stroke-linecap="round"><path d="M30.500 45h14M44.500 31v0" stroke="#65c3ec"/><path d="M59 31v14M73 45v0" stroke="#58b082"/><path d="M59 59h14M59 73v0" stroke="#e4b44a"/><path d="M44.500 59v14M30.500 59v0" stroke="#ce3560"/></g></svg></div>
  <div class="app run"><svg viewBox="0 0 104 104"><rect x="13.500" y="13.500" width="77" height="77" rx="17" fill="#fff"/><path d="M65 25.500V43L29 67.500l-5-6q-1-1.500.5-3z" fill="#265f9f"/><path d="M65 79.500V62L29 37.500l-5 6q-1 1.500.5 3z" fill="#3779c5"/><path d="M65 25.500l13.700 6.500v41L65 79.500z" fill="#4a98e8"/></svg></div>
  <div class="app run"><svg viewBox="0 0 104 104"><rect x="13.500" y="13.500" width="77" height="77" rx="17" fill="url(#g-rim)"/><rect x="16.500" y="16.500" width="71" height="71" rx="14" fill="#050505"/><rect x="22" y="22.500" width="60" height="60" rx="8" fill="#182022"/><text x="26" y="41" class="term">$</text><path d="M39 26.500h8v16h-8z" fill="#2a6a22"/></svg></div>
  <div class="app run"><svg viewBox="0 0 104 104"><path d="M9 68v20q0 11 43 11t43-11V68z" fill="url(#g-metal)"/><ellipse cx="52" cy="70" rx="43" ry="13" fill="#9b9b9b"/><ellipse cx="52" cy="67" rx="41" ry="12" fill="#c9c9c9"/><path d="M9 44v20q0 11 43 11t43-11V44z" fill="url(#g-metal)"/><ellipse cx="52" cy="46" rx="43" ry="13" fill="#9b9b9b"/><ellipse cx="52" cy="43" rx="41" ry="12" fill="#c9c9c9"/><path d="M9 19v21q0 11 43 11t43-11V19z" fill="url(#g-metal)"/><ellipse cx="52" cy="19" rx="43" ry="13.500" fill="#6e6e6e"/><ellipse cx="52" cy="20" rx="41" ry="12.500" fill="#c3c3c3"/></svg></div>
  <i class="sep"></i>
  <div class="app"><svg viewBox="0 0 104 104"><rect x="13.500" y="13.500" width="77" height="77" rx="17" fill="#f2f2f4"/><rect x="19" y="19.500" width="66" height="66" rx="11" fill="url(#g-sea)"/><path d="M52 66h34l7 22q2 7-24 7t-24-7z" fill="#9a9ea6"/><path d="M57 68h25l7 19q-19 9-40 0z" fill="#d9dce1"/><path d="M60 73l6 4-2 6zM72 70l6 6-7 3zM68 82l9-2-3 6z" fill="#6f747d"/><rect x="52" y="52" width="35" height="17" rx="5" fill="#161617"/><ellipse cx="69.500" cy="54.500" rx="17" ry="3.500" fill="#3a3a3c"/></svg></div>
  <i class="sep wide"></i>
  <div class="app bin"><svg viewBox="0 0 104 104"><path d="M18 18l9 68q1 9 25 9t25-9l9-68z" fill="url(#g-bin)"/><ellipse cx="52" cy="18.500" rx="34" ry="7.500" fill="#594a50" stroke="#85878b" stroke-width="1.600"/></svg></div>
</footer>
</body>
</html>
```
FILE: styles.css
```css
* { box-sizing: border-box; }
html, body { margin: 0; }
body {
  width: 2880px; height: 1800px; overflow: hidden;
  display: flex; flex-direction: column;
  background: linear-gradient(to right, #29456b 0, #213058 500px, #1f2451 960px, #1c1b4a 1700px) top / 100% 120px no-repeat, linear-gradient(100deg, #28060b, #2e070d 70%, #3a080f);
  font-family: "Lato", sans-serif; font-size: 24px; color: #000;
}
svg { display: block; flex: none; overflow: visible; }
.defs { position: absolute; }
b { font-weight: 800; }

/* macOS menu bar */
.menubar { height: 48px; flex: none; display: flex; align-items: center; font: 500 25px/48px "Inter", sans-serif; color: #ececee; }
.apple { width: 32px; height: 32px; margin: -4px 0 0 41px; }
.menus { display: grid; grid-template-columns: 142px 84.600px 88px 99.500px 128.500px 175px 132px 85px 137px 80px; margin-left: 41px; }
.menus b { font-weight: 700; font-size: 26px; }
.status { margin-left: auto; display: flex; align-items: center; padding-right: 38px; font-size: 26px; }
.st-play { width: 28px; height: 28px; }
.st-batt { width: 52px; height: 28px; margin-left: 34px; }
.st-wifi { width: 34px; height: 24px; margin: -3px 0 0 35px; }
.st-find { width: 26px; height: 26px; margin-left: 38px; }
.st-ctl { width: 30px; height: 28px; margin: 2px 0 0 37px; }
.day { margin-left: 33px; letter-spacing: .2px; }
.time { margin-left: 14px; letter-spacing: .6px; }

/* browser window */
.window {
  position: relative; flex: none; height: 1612px; margin-top: 2px; overflow: hidden;
  display: flex; flex-direction: column; background: #fff; border-radius: 20px;
  box-shadow: 0 0 0 2px #000, 0 30px 60px 10px #000;
}
.window::after { content: ""; position: absolute; inset: 0; border: 1px solid rgba(255,255,255,.25); border-top: 2px solid rgba(255,255,255,.35); border-radius: 20px; pointer-events: none; }
.tabstrip { height: 84px; flex: none; display: flex; align-items: flex-end; background: #202124; color: #bdc1c6; font: 23.800px/1 "Inter", sans-serif; }
.lights { width: 188px; height: 68px; padding: 15px 0 0 42px; display: flex; gap: 16px; }
.lights i { width: 24px; height: 24px; border-radius: 50%; }
.lights .red { background: #ed6a5e; }
.lights .amber { background: #f4be4f; }
.lights .green { background: #61c554; }
.tab { width: 478px; height: 68px; flex: none; display: flex; align-items: center; padding: 0 23px 0 22px; position: relative; }
.tab:not(.plain):not(.active)::after { content: ""; position: absolute; right: 0; top: 15px; width: 2px; height: 40px; background: #4a4c50; }
.fav { width: 32px; height: 32px; flex: none; }
.tab-title { flex: 1; margin: 0 16px; white-space: nowrap; overflow: hidden; line-height: 34px; mask-image: linear-gradient(to right, #000 320px, transparent 350px); }
.close { width: 18px; height: 18px; }
.active { background: #35363a; color: #fff; border-radius: 16px 16px 0 0; }
.active::before, .active::after { content: ""; position: absolute; bottom: 0; width: 16px; height: 16px; }
.active::before { left: -16px; background: radial-gradient(circle at 0 0, transparent 15.500px, #35363a 16px); }
.active::after { right: -16px; background: radial-gradient(circle at 100% 0, transparent 15.500px, #35363a 16px); }
.itf-fav { color: #3f9377; font-weight: 700; font-size: 14px; line-height: 32px; text-align: center; letter-spacing: 1px; }
.plus { width: 24px; height: 24px; margin: 0 0 22px 32px; }
.more-tabs { width: 28px; height: 28px; margin: 0 30px 20px auto; }
.toolbar { height: 74px; flex: none; display: flex; align-items: center; background: #35363a; border-bottom: 2px solid #5f6064; }
.tb { fill: #f1f3f4; width: 39px; height: 39px; }
.back { margin-left: 24px; }
.fwd { margin-left: 26px; }
.reload { width: 40px; height: 40px; margin-left: 24px; }
.omnibox { width: 2447px; height: 56px; margin-left: 25px; border-radius: 28px; background: #202124; display: flex; align-items: center; padding: 0 18px 0 27px; }
.lock { width: 16px; height: 22px; }
.url { margin-left: 24px; flex: 1; font: 27.750px/40px "Inter", sans-serif; color: #8f9296; }
.url em { font-style: normal; color: #fff; }
.star { width: 36px; height: 36px; }
.puzzle { width: 34px; height: 34px; margin-left: 27px; }
.avatar { width: 44px; height: 44px; margin-left: 25px; }
.dots { width: 8px; height: 28px; margin-left: 38px; fill: #f1f3f4; }

/* site header */
.topbar { height: 88px; flex: none; display: flex; align-items: center; background: #3e8d72; padding: 0 176px; color: #fff; font-weight: 800; }
.contact { margin-right: auto; line-height: 84px; padding-bottom: 2px; }
.social { width: 420px; height: 88px; background: #4ba687; clip-path: polygon(40px 0, 100% 0, 380px 100%, 0 100%); display: flex; align-items: center; padding-left: 54px; fill: #fff; }
.fb { width: 36px; height: 36px; }
.tw { width: 34px; height: 34px; margin-left: 58px; }
.ig { width: 34px; height: 34px; margin-left: 57px; }
.yt { width: 36px; height: 28px; margin-left: 57px; }
.signup { width: 274px; height: 88px; margin-left: -40px; background: #54565b; clip-path: polygon(40px 0, 100% 0, 234px 100%, 0 100%); display: flex; align-items: center; padding-left: 68px; line-height: 84px; }
.signup span { padding-bottom: 2px; }
.mail { width: 32px; height: 28px; margin-right: 20px; }
.ipin { width: 220px; height: 88px; margin-left: -40px; background: #fff; color: #54565b; clip-path: polygon(40px 0, 100% 0, 180px 100%, 0 100%); display: flex; align-items: center; padding-left: 27px; font-size: 32px; line-height: 88px; }
.stripes { width: 80px; height: 88px; }
.navbar { height: 88px; flex: none; display: flex; align-items: center; border-bottom: 2px solid #3e8d72; padding-left: 176px; }
.logo svg { width: 206px; height: 86px; }
.logo-text { font: 800 39px "Lato", sans-serif; fill: #3e8d72; stroke: #3e8d72; stroke-width: 1px; }
.links { display: flex; gap: 60px; margin-left: 93.500px; font-weight: 800; line-height: 84px; white-space: nowrap; }
.crumbs { height: 90px; flex: none; display: flex; align-items: center; padding-left: 176px; border-bottom: 2px solid #54565b; font-size: 32px; line-height: 88px; color: #54565b; }
.crumbs svg { width: 18px; height: 30px; margin: 0 35px; }
.crumbs .second { margin: 0 36px 0 37px; }
.crumbs b { font-weight: 400; color: #000; }
.peek { height: 12px; flex: none; display: flex; padding-left: 176px; align-items: flex-start; }
.peek-box { width: 520px; height: 4px; border: 2px solid #54565b; border-top: 0; }
.peek-bar { width: 986px; height: 8px; margin: 4px 0 0 18px; background: #3e8d72; position: relative; z-index: 1; }
.peek-bar::after { content: ""; position: absolute; left: 483px; top: 8px; border: 13px solid transparent; border-top: 12px solid #3e8d72; border-bottom: 0; }
.subtabs { height: 140px; flex: none; background: #e5e5e5; padding: 40px 176px 0; display: flex; gap: 20px; }
.subtab { flex: 1; height: 100px; background: #f0f0f0; color: #adadad; font-weight: 800; display: flex; align-items: center; justify-content: space-between; padding: 1px 26px 1px 29.500px; }
.subtab.on { background: #fff; color: #3e8d72; }
.i-gauge { width: 38px; height: 26px; margin-right: -1px; }
.i-cal { width: 28px; height: 32px; margin-right: 3px; }
.i-trend { width: 32px; height: 24px; margin-right: 2px; }
.i-bars { width: 30px; height: 22px; margin-right: 2px; }
.i-cup { width: 34px; height: 32px; margin-right: 1px; }

/* activity list */
.content { padding: 0 176px; flex: none; }
h1 { margin: 0; padding: 85px 0 1px; font-size: 56px; line-height: 68px; font-weight: 800; }
.event-head { display: flex; justify-content: space-between; align-items: flex-end; height: 130px; padding-bottom: 24px; font-size: 32px; line-height: 40px; }
.first { padding-bottom: 26px; }
.event-head h2 { margin: 0; font-size: 32px; font-weight: 800; color: #54565b; }
.event { border: 2px solid #979797; border-bottom: 0; }
.venue, .draw, .match { border-bottom: 2px solid #979797; }
.venue { height: 98px; background: #e5e5e5; display: flex; align-items: center; padding: 0 40px 0 42px; white-space: nowrap; }
.pin { width: 24px; height: 32px; margin-right: 24px; }
.city { margin-right: 60px; }
.flag { width: 52px; height: 36px; margin: 0 64px 0 12px; }
.surface { margin-left: auto; }
.clay { width: 32px; height: 22px; margin: 5px 0 0 28px; }
.draw { height: 98px; display: grid; grid-template-columns: 320px 219px auto; align-items: center; padding-left: 40px; }
.raised .venue span, .raised .draw span { padding-bottom: 2px; }
.match { height: 100px; display: grid; grid-template-columns: 320px 62px 60px 114px 1fr 96px 96px 96px; align-items: center; padding-left: 40px; }
.h2h { height: 40px; margin-top: -2px; border-radius: 4px; background: #3e8d72; color: #fff; font: 700 18px/39px "Liberation Sans", sans-serif; text-align: center; }
.vs { height: 98px; display: grid; place-items: center; background: linear-gradient(#3e8d72, #3e8d72) center / 2px 100% no-repeat; }
.vs b { width: 54px; height: 54px; border: 4px solid #3e8d72; border-radius: 50%; background: #fff; text-align: center; line-height: 44px; }
.opp { display: flex; align-items: center; padding: 0 40px 0 2px; }
.chile { width: 56px; height: 37px; margin: -10px 14px 0 0; }
.name { margin-left: 12px; font-weight: 800; color: #54565b; word-spacing: 2px; }
.bye { margin-left: auto; font-weight: 800; color: #979797; }
.set { height: 98px; background: #e5e5e5; text-align: center; line-height: 98px; }
.mid { background: #fff; }

/* floating widgets */
.shield { position: absolute; left: 28px; top: 1492px; width: 100px; height: 100px; border-radius: 20px; background: #79a8e0; box-shadow: 0 4px 14px rgba(0,0,0,.25); display: grid; place-items: center; }
.shield svg { width: 60px; height: 74px; margin-top: -8px; }
.to-top { position: absolute; right: 0; top: 1504px; width: 68px; height: 68px; background: #54565b; display: grid; place-items: center; }
.to-top svg { width: 30px; height: 18px; margin-top: 3px; }

/* dock */
.dock { position: relative; width: 2600px; height: 126px; margin: 2px 0 0 140px; padding: 0 4px; border: 2px solid #5f3d43; border-radius: 42px; background: linear-gradient(#32161a, #42161e); box-shadow: 0 0 90px rgba(0,0,0,.3); display: flex; }
.app { width: 104px; flex: none; height: 122px; padding-top: 3.500px; position: relative; }
.app svg { width: 104px; height: 104px; }
.run::after { content: ""; position: absolute; left: 48px; top: 112px; width: 8px; height: 8px; border-radius: 50%; background: #c096a0; }
.sep { width: 46px; flex: none; height: 94px; margin-top: 14px; background: linear-gradient(#704950, #704950) center / 2px 100% no-repeat; }
.wide { width: 50px; }
.bin { width: 96px; }
.bin svg { margin-left: -4px; }
.cal-month { font: 700 16px "Inter", sans-serif; fill: #fff; text-anchor: middle; }
.cal-day { font: 300 47px "Inter", sans-serif; fill: #222; text-anchor: middle; letter-spacing: -2px; }
.term { font: 700 19px "Liberation Mono", monospace; fill: #6fe04a; }
```
